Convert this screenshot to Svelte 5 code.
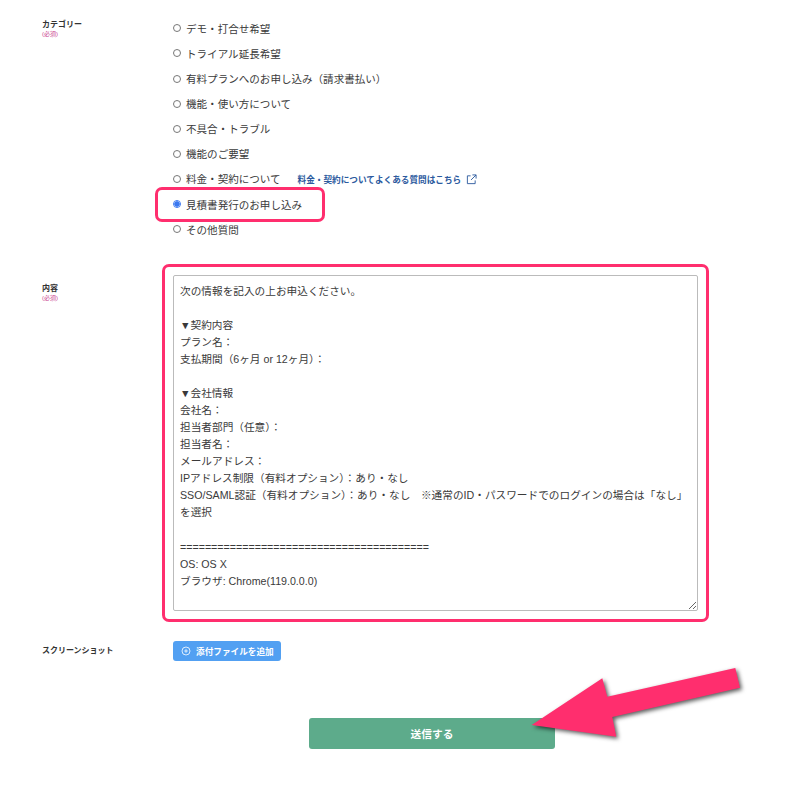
<script>
  const options = [
    'デモ・打合せ希望',
    'トライアル延長希望',
    '有料プランへのお申し込み（請求書払い）',
    '機能・使い方について',
    '不具合・トラブル',
    '機能のご要望',
    '料金・契約について',
    '見積書発行のお申し込み',
    'その他質問'
  ];
  const body = `次の情報を記入の上お申込ください。

▼契約内容
プラン名：
支払期間（6ヶ月 or 12ヶ月）：

▼会社情報
会社名：
担当者部門（任意）：
担当者名：
メールアドレス：
IPアドレス制限（有料オプション）：あり・なし
SSO/SAML認証（有料オプション）：あり・なし　※通常のID・パスワードでのログインの場合は「なし」を選択

========================================
OS: OS X
ブラウザ: Chrome(119.0.0.0)`;
</script>

<div class="page">
  <form class="form">
    <div class="row category">
      <div class="label">
        <span class="name">カテゴリー</span>
        <span class="req">(必須)</span>
      </div>
      <div class="options">
        {#each options as option, i}
          <label class="option">
            <input type="radio" name="category" checked={i === 7} />
            <span>{option}</span>
            {#if i === 6}
              <a class="faq" href="#faq">
                料金・契約についてよくある質問はこちら
                <svg class="ext" viewBox="0 0 12 12" width="11" height="11" fill="none" stroke="currentColor" stroke-width="1">
                  <path d="M5 2H1.5v8.5H10V7" />
                  <path d="M7 1h4v4M11 1 5.5 6.5" />
                </svg>
              </a>
            {/if}
            {#if i === 7}<span class="mark mark-option"></span>{/if}
          </label>
        {/each}
      </div>
    </div>

    <div class="row content">
      <div class="label">
        <span class="name">内容</span>
        <span class="req">(必須)</span>
      </div>
      <div class="area-wrap">
        <textarea value={body}></textarea>
        <span class="mark mark-area"></span>
      </div>
    </div>

    <div class="row shot">
      <div class="label"><span class="name">スクリーンショット</span></div>
      <button type="button" class="attach">
        <svg viewBox="0 0 10 10" width="10" height="10" fill="none" stroke="currentColor" stroke-width="0.8">
          <circle cx="5" cy="5" r="4" />
          <path d="M5 3.2v3.6M3.2 5h3.6" />
        </svg>
        添付ファイルを追加
      </button>
    </div>

    <button type="button" class="submit">送信する</button>
  </form>

  <svg class="arrow" viewBox="0 0 787 787" width="787" height="787">
    <polygon points="531.7,725 602.3,678.3 607.3,696.7 735.3,668 740,687.7 612.3,717 616.3,736.7" />
  </svg>
</div>

<style>
  :global(body) {
    margin: 0;
    background: #fff;
  }
  .page {
    position: relative;
    width: 787px;
    height: 787px;
    overflow: hidden;
    font-family: "Liberation Sans", "Noto Sans CJK JP", sans-serif;
    color: #3a3a3a;
  }
  .form {
    display: flex;
    flex-direction: column;
    padding: 15.8px 0 0 42px;
  }
  .row {
    display: grid;
    grid-template-columns: 131px 525px;
  }
  .label {
    display: flex;
    flex-direction: column;
    font-weight: 700;
  }
  .name {
    font-size: 8px;
    line-height: 10px;
    color: #333;
  }
  .req {
    font-size: 6px;
    line-height: 8px;
    font-weight: 400;
    color: #c9418f;
  }
  .category .label {
    padding-top: 4px;
  }
  .options {
    display: flex;
    flex-direction: column;
  }
  .option {
    position: relative;
    display: flex;
    align-items: center;
    height: 25.1px;
    font-size: 10.55px;
  }
  .option input {
    appearance: none;
    box-sizing: border-box;
    width: 8px;
    height: 8px;
    margin: 0 5px 0 0;
    border: 1px solid #777;
    border-radius: 50%;
    background: #fff;
    flex: none;
  }
  .option input:checked {
    border-color: #3b78f0;
    background: radial-gradient(circle, #3b78f0 0 2.4px, #fff 3px);
  }
  .faq {
    display: inline-flex;
    align-items: center;
    gap: 5px;
    margin-left: 17px;
    font-size: 8.65px;
    font-weight: 700;
    color: #2c5a9e;
    text-decoration: none;
  }
  .ext {
    margin-top: 2px;
  }
  .mark {
    position: absolute;
    box-sizing: border-box;
    border: 3.5px solid #ff2e6e;
    border-radius: 7px;
    pointer-events: none;
  }
  .mark-option {
    left: -18px;
    top: -4.5px;
    width: 170px;
    height: 35px;
  }
  .content {
    margin-top: 33.2px;
  }
  .content .label {
    padding-top: 9px;
  }
  .area-wrap {
    position: relative;
    height: 336px;
  }
  textarea {
    display: block;
    box-sizing: border-box;
    width: 525px;
    height: 336px;
    margin: 0;
    padding: 7px 7px 7px 6px;
    border: 1px solid #bbb;
    border-radius: 2px;
    background: #fff;
    color: #3a3a3a;
    font-family: inherit;
    font-size: 10.66px;
    line-height: 17.05px;
    outline: none;
  }
  .mark-area {
    left: -11px;
    top: -11px;
    width: 547px;
    height: 358px;
  }
  .shot {
    margin-top: 30px;
    align-items: center;
  }
  .attach {
    display: flex;
    align-items: center;
    gap: 5px;
    width: 108px;
    height: 20px;
    padding: 0 0 0 8px;
    border: 0;
    border-radius: 3px;
    background: #52a0f2;
    color: #fff;
    font-family: inherit;
    font-size: 8.65px;
    font-weight: 700;
    white-space: nowrap;
  }
  .submit {
    width: 246px;
    height: 31px;
    margin: 57px 0 0 267px;
    border: 0;
    border-radius: 3px;
    background: #5dab8b;
    color: #fff;
    font-family: inherit;
    font-size: 10.7px;
    font-weight: 700;
  }
  .arrow {
    position: absolute;
    left: 0;
    top: 0;
    pointer-events: none;
    filter: drop-shadow(2px 2px 2px rgba(0, 0, 0, 0.65));
  }
  .arrow polygon {
    fill: #ff2e6e;
  }
</style>
